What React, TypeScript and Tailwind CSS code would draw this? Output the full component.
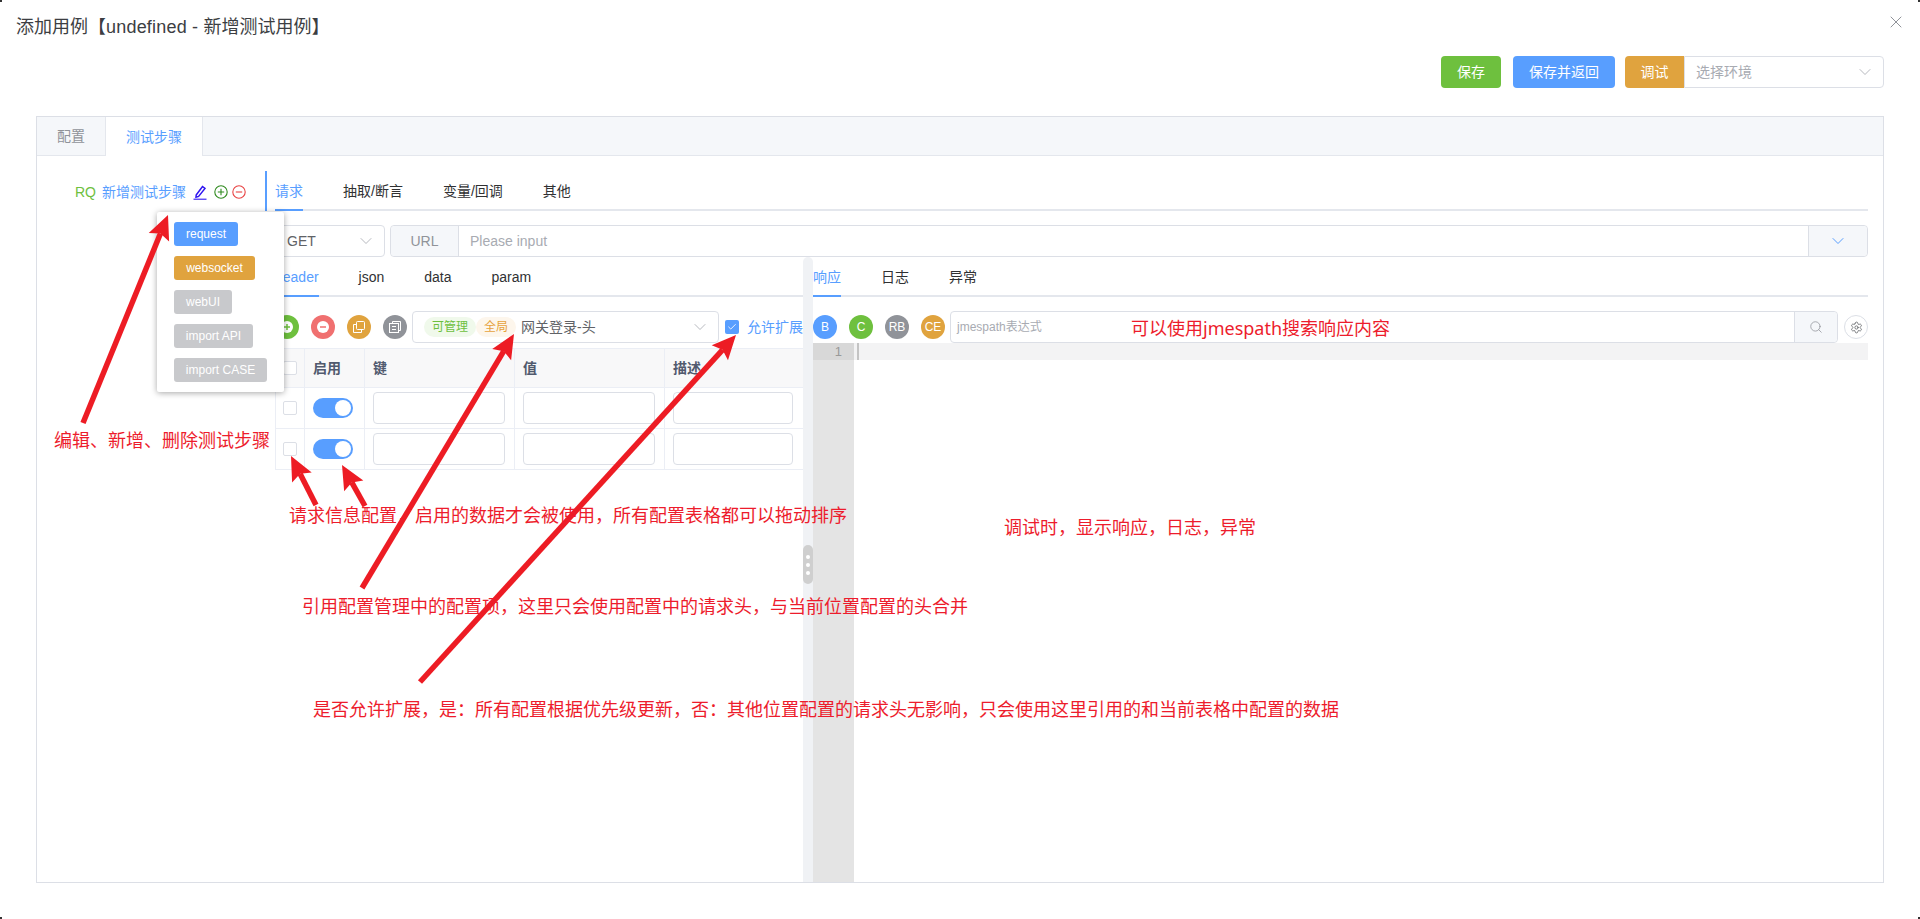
import React from "react";
import { ChevronDown, X, Search, Settings, Check } from "lucide-react";

const FONT = "[font-family:'Liberation_Sans','Noto_Sans_CJK_SC',sans-serif]";

function Arrow({ x1, y1, x2, y2 }: { x1: number; y1: number; x2: number; y2: number }) {
  const dx = x2 - x1, dy = y2 - y1;
  const len = Math.hypot(dx, dy);
  const ux = dx / len, uy = dy / len;
  const bx = x2 - ux * 24, by = y2 - uy * 24;
  const nx = -uy, ny = ux;
  const hw = 11;
  return (
    <g>
      <line x1={x1} y1={y1} x2={bx + ux * 4} y2={by + uy * 4} stroke="#ed1c24" strokeWidth={5.5} />
      <polygon
        points={`${x2},${y2} ${bx + nx * hw},${by + ny * hw} ${bx + ux * 4},${by + uy * 4} ${bx - nx * hw},${by - ny * hw}`}
        fill="#ed1c24"
      />
    </g>
  );
}

function Chevron() {
  return <ChevronDown className="h-[20px] w-[20px] text-[#a8abb2]" strokeWidth={1} />;
}

function TabBar({ items, className }: { items: string[]; className: string }) {
  return (
    <div className={`flex h-[40px] gap-[40px] border-b-2 border-[#e4e7ed] ${className}`}>
      {items.map((t, i) => (
        <div
          key={t}
          className={`-mb-[2px] flex h-[40px] items-center border-b-2 pt-[2px] text-sm ${
            i === 0 ? "border-[#589eff] text-[#589eff]" : "border-transparent text-[#303133]"
          }`}
        >
          {t}
        </div>
      ))}
    </div>
  );
}

function Round({ color, children }: { color: string; children: React.ReactNode }) {
  return (
    <div className={`flex h-[24px] w-[24px] shrink-0 items-center justify-center rounded-full text-xs text-white ${color}`}>
      {children}
    </div>
  );
}

function Box() {
  return <div className="h-[14px] w-[14px] rounded-[2px] border border-[#dcdfe6] bg-white" />;
}

function Row() {
  const cell = "flex items-center border-r border-[#ebeef5]";
  return (
    <div className="flex h-[41px] border-b border-[#ebeef5]">
      <div className={`${cell} w-[29px] justify-center`}>
        <Box />
      </div>
      <div className={`${cell} w-[60px] pl-[8px]`}>
        <div className="flex h-[20px] w-[40px] items-center justify-end rounded-full bg-[#589eff] pr-[2px]">
          <div className="h-[16px] w-[16px] rounded-full bg-white" />
        </div>
      </div>
      <div className={`${cell} w-[150px] pl-[8px]`}>
        <div className="h-[32px] w-[132px] rounded-[4px] border border-[#dcdfe6]" />
      </div>
      <div className={`${cell} w-[150px] pl-[8px]`}>
        <div className="h-[32px] w-[132px] rounded-[4px] border border-[#dcdfe6]" />
      </div>
      <div className="flex flex-1 items-center pl-[8px]">
        <div className="h-[32px] w-[120px] rounded-[4px] border border-[#dcdfe6]" />
      </div>
    </div>
  );
}

const notes = [
  { t: "编辑、新增、删除测试步骤", c: "left-[54px] top-[427px]" },
  { t: "可以使用jmespath搜索响应内容", c: "left-[1131px] top-[315px]" },
  { t: "请求信息配置，启用的数据才会被使用，所有配置表格都可以拖动排序", c: "left-[289px] top-[502px]" },
  { t: "调试时，显示响应，日志，异常", c: "left-[1004px] top-[514px]" },
  { t: "引用配置管理中的配置项，这里只会使用配置中的请求头，与当前位置配置的头合并", c: "left-[302px] top-[593px]" },
  { t: "是否允许扩展，是：所有配置根据优先级更新，否：其他位置配置的请求头无影响，只会使用这里引用的和当前表格中配置的数据", c: "left-[313px] top-[696px]" },
];

export default function App() {
  const th = "flex items-center border-r border-[#ebeef5] text-sm font-bold text-[#515a6e]";
  return (
    <div className={`relative h-[919px] w-full overflow-hidden bg-white ${FONT}`}>
      {/* title */}
      <div className="flex h-[56px] items-start pl-[16px] pt-[16px] text-lg leading-[22px] text-[#3c3e42]">
        <span>
          添加用例【<span className="tracking-[0.2px]">undefined - </span>新增测试用例】
        </span>
      </div>
      <button className="absolute left-[1886px] top-[12px] text-[#909399]">
        <X className="h-[20px] w-[20px]" strokeWidth={1.2} />
      </button>

      {/* actions */}
      <div className="flex h-[32px] justify-end pr-[36px] text-sm text-white">
        <div className="mr-[12px] flex w-[60px] items-center justify-center rounded-[4px] bg-[#6ec03e]">保存</div>
        <div className="mr-[10px] flex w-[102px] items-center justify-center rounded-[4px] bg-[#589eff]">保存并返回</div>
        <div className="flex w-[59px] items-center justify-center rounded-l-[4px] bg-[#e0a33e]">调试</div>
        <div className="flex w-[200px] items-center justify-between rounded-r-[4px] border border-[#dcdfe6] pl-[11px] pr-[8px] text-[#a8abb2]">
          选择环境
          <Chevron />
        </div>
      </div>

      {/* card */}
      <div className="mx-[36px] mt-[28px] flex h-[767px] flex-col border border-[#dcdfe6] text-[#303133]">
        <div className="flex h-[39px] border-b border-[#e4e7ed] bg-[#f5f7fa] text-sm">
          <div className="flex w-[68px] items-center justify-center text-[#909399]">配置</div>
          <div className="-mb-px flex w-[98px] items-center justify-center border-x border-[#e4e7ed] bg-white text-[#589eff]">
            测试步骤
          </div>
        </div>

        <div className="flex min-h-0 flex-1 pt-[15px]">
          {/* step tree */}
          <div className="flex h-[40px] w-[228px] shrink-0 items-start pl-[38px] pt-[11px] text-sm leading-[20px]">
            <span className="text-[#6ec03e]">RQ</span>
            <span className="ml-[6px] text-[#589eff]">新增测试步骤</span>
            <svg className="ml-[7px] mt-[3px]" width="14" height="15" viewBox="0 0 14 15" fill="none" stroke="#2f14f0" strokeWidth="1.5">
              <path d="M3.2 10 L9.5 1.5 L12 3.4 L5.6 11.4 L3 12.2 Z" />
              <path d="M0.5 14.2 H13.5" strokeWidth="1.1" />
            </svg>
            <svg className="ml-[7px] mt-[3px]" width="14" height="14" viewBox="0 0 14 14" fill="none" stroke="#2f8a1e" strokeWidth="1.1">
              <circle cx="7" cy="7" r="6.2" />
              <path d="M7 3.8 V10.2 M3.8 7 H10.2" />
            </svg>
            <svg className="ml-[4px] mt-[3px]" width="14" height="14" viewBox="0 0 14 14" fill="none" stroke="#e84343" strokeWidth="1.1">
              <circle cx="7" cy="7" r="6.2" />
              <path d="M3.8 7 H10.2" />
            </svg>
          </div>

          {/* step editor */}
          <div className="flex min-w-0 flex-1 flex-col pr-[15px]">
            <div className="border-l-2 border-[#589eff] pl-[8px]">
              <TabBar items={["请求", "抽取/断言", "变量/回调", "其他"]} className="" />
            </div>
            <div className="flex min-h-0 flex-1 flex-col pl-[10px]">
              <div className="mt-[14px] flex h-[32px] shrink-0 text-sm">
                <div className="flex w-[110px] items-center justify-between rounded-[4px] border border-[#dcdfe6] pl-[11px] pr-[8px] text-[#606266]">
                  GET
                  <Chevron />
                </div>
                <div className="ml-[5px] flex flex-1 rounded-[4px] border border-[#dcdfe6]">
                  <div className="flex w-[68px] items-center justify-center rounded-l-[4px] border-r border-[#dcdfe6] bg-[#f5f7fa] text-[#909399]">
                    URL
                  </div>
                  <div className="flex flex-1 items-center pl-[11px] text-[#a8abb2]">Please input</div>
                  <div className="flex w-[59px] items-center justify-center rounded-r-[4px] border-l border-[#dcdfe6] bg-[#f5f7fa] text-[#589eff]">
                    <ChevronDown className="h-[20px] w-[20px]" strokeWidth={1.2} />
                  </div>
                </div>
              </div>

              <div className="flex min-h-0 flex-1">
                {/* left pane */}
                <div className="w-[528px] shrink-0">
                  <TabBar items={["header", "json", "data", "param"]} className="" />
                  <div className="mt-[14px] flex h-[32px] items-center gap-[12px]">
                    <Round color="bg-[#6ec03e]">
                      <svg width="14" height="14" viewBox="0 0 14 14">
                        <circle cx="7" cy="7" r="6" fill="#fff" />
                        <path d="M7 4 V10 M4 7 H10" stroke="#6ec03e" strokeWidth="1.5" />
                      </svg>
                    </Round>
                    <Round color="bg-[#f07070]">
                      <svg width="14" height="14" viewBox="0 0 14 14">
                        <circle cx="7" cy="7" r="6" fill="#fff" />
                        <path d="M4 7 H10" stroke="#f07070" strokeWidth="1.5" />
                      </svg>
                    </Round>
                    <Round color="bg-[#e0a33e]">
                      <svg width="14" height="14" viewBox="0 0 14 14" fill="none" stroke="#fff" strokeWidth="1">
                        <rect x="4.5" y="1.5" width="8" height="8" rx="1" />
                        <path d="M4.5 4.5 H1.5 V12.5 H9.5 V9.5" />
                      </svg>
                    </Round>
                    <Round color="bg-[#909399]">
                      <svg width="14" height="14" viewBox="0 0 14 14" fill="none" stroke="#fff" strokeWidth="1">
                        <path d="M4.5 3.5 V1.5 H12.5 V10.5 H10.5" />
                        <rect x="1.5" y="3.5" width="9" height="9" />
                        <path d="M4 6.5 H8 M4 9.5 H8" />
                      </svg>
                    </Round>
                    <div className="-ml-[7px] flex h-[32px] w-[307px] items-center rounded-[4px] border border-[#dcdfe6] pl-[11px] pr-[8px] text-sm text-[#606266]">
                      <span className="flex h-[20px] w-[52px] items-center justify-center rounded-full bg-[#f0f9eb] text-xs text-[#6ec03e]">可管理</span>
                      <span className="flex h-[20px] w-[40px] items-center justify-center rounded-full bg-[#fdf6ec] text-xs text-[#e6a23c]">全局</span>
                      <span className="ml-[5px] flex-1">网关登录-头</span>
                      <Chevron />
                    </div>
                    <div className="-ml-[6px] flex items-center text-sm text-[#589eff]">
                      <div className="flex h-[14px] w-[14px] items-center justify-center rounded-[2px] bg-[#589eff]">
                        <Check className="h-[10px] w-[10px] text-white" strokeWidth={2} />
                      </div>
                      <span className="ml-[8px] whitespace-nowrap">允许扩展</span>
                    </div>
                  </div>
                  <div className="mt-[5px] border-l border-t border-[#ebeef5]">
                    <div className="flex h-[39px] border-b border-[#ebeef5] bg-[#f8f8f9]">
                      <div className={`${th} w-[29px] justify-center`}>
                        <Box />
                      </div>
                      <div className={`${th} w-[60px] pl-[8px]`}>启用</div>
                      <div className={`${th} w-[150px] pl-[8px]`}>键</div>
                      <div className={`${th} w-[150px] pl-[8px]`}>值</div>
                      <div className="flex flex-1 items-center pl-[8px] text-sm font-bold text-[#515a6e]">描述</div>
                    </div>
                    <Row />
                    <Row />
                  </div>
                </div>

                {/* splitter */}
                <div className="relative w-[10px] shrink-0 rounded-t-full bg-[#f0f2f5]">
                  <div className="absolute left-0 top-[288px] flex h-[39px] w-[10px] flex-col items-center justify-center gap-[4px] rounded-full bg-[#cfcfcf]">
                    <div className="h-[4px] w-[4px] rounded-full bg-white" />
                    <div className="h-[4px] w-[4px] rounded-full bg-white" />
                    <div className="h-[4px] w-[4px] rounded-full bg-white" />
                  </div>
                </div>

                {/* right pane */}
                <div className="flex min-w-0 flex-1 flex-col">
                  <TabBar items={["响应", "日志", "异常"]} className="shrink-0" />
                  <div className="mt-[14px] flex h-[32px] shrink-0 items-center">
                    <div className="flex gap-[12px]">
                      <Round color="bg-[#589eff]">B</Round>
                      <Round color="bg-[#6ec03e]">C</Round>
                      <Round color="bg-[#909399]">RB</Round>
                      <Round color="bg-[#e0a33e]">CE</Round>
                    </div>
                    <div className="ml-[5px] flex h-[32px] flex-1 rounded-[4px] border border-[#dcdfe6]">
                      <div className="flex flex-1 items-center pl-[6px] text-xs text-[#a8abb2]">jmespath表达式</div>
                      <div className="flex w-[43px] items-center justify-center rounded-r-[4px] border-l border-[#dcdfe6] bg-[#f5f7fa] text-[#909399]">
                        <Search className="h-[14px] w-[14px]" strokeWidth={1.3} />
                      </div>
                    </div>
                    <div className="ml-[6px] flex h-[24px] w-[24px] items-center justify-center rounded-full border border-[#dcdfe6] text-[#606266]">
                      <Settings className="h-[13px] w-[13px]" strokeWidth={1.5} />
                    </div>
                  </div>
                  <div className="flex min-h-0 flex-1 text-[13px]">
                    <div className="w-[41px] shrink-0 bg-[#e4e4e4]">
                      <div className="h-[17px] bg-[#d8d8d8] pr-[12px] text-right leading-[17px] text-[#999]">1</div>
                    </div>
                    <div className="h-[17px] flex-1 bg-[#f3f3f4] pl-[3px]">
                      <div className="h-[17px] w-[2px] bg-[#c4c4c4]" />
                    </div>
                  </div>
                </div>
              </div>
            </div>
          </div>
        </div>
      </div>

      {/* popover */}
      <div className="absolute left-[157px] top-[212px] flex h-[180px] w-[127px] flex-col items-start gap-[10px] rounded-[2px] bg-white pl-[17px] pt-[10px] text-xs text-white shadow-[0_1px_6px_rgba(0,0,0,0.35)]">
        <div className="flex h-[24px] w-[64px] items-center justify-center rounded-[3px] bg-[#589eff]">request</div>
        <div className="flex h-[24px] w-[81px] items-center justify-center rounded-[3px] bg-[#e0a33e]">websocket</div>
        <div className="flex h-[24px] w-[58px] items-center justify-center rounded-[3px] bg-[#c8c9cc]">webUI</div>
        <div className="flex h-[24px] w-[79px] items-center justify-center rounded-[3px] bg-[#c8c9cc]">import API</div>
        <div className="flex h-[24px] w-[93px] items-center justify-center rounded-[3px] bg-[#c8c9cc]">import CASE</div>
      </div>

      {/* annotation arrows */}
      <svg className="pointer-events-none absolute left-0 top-0" width="1920" height="919">
        <Arrow x1={83} y1={423} x2={168} y2={215} />
        <Arrow x1={316} y1={505} x2={291} y2={456} />
        <Arrow x1={365} y1={506} x2={342} y2={465} />
        <Arrow x1={362} y1={588} x2={514} y2={334} />
        <Arrow x1={420} y1={682} x2={736} y2={335} />
      </svg>

      {/* annotation notes */}
      {notes.map((n) => (
        <div
          key={n.t}
          className={`absolute whitespace-nowrap text-[18px] leading-[26px] text-[#ed1c2c] [font-family:'Noto_Sans','Noto_Sans_CJK_SC',sans-serif] ${n.c}`}
        >
          {n.t}
        </div>
      ))}

      {/* window corner specks */}
      <div className="absolute left-0 top-0 h-[2px] w-[2px] bg-[#333]" />
      <div className="absolute right-0 top-0 h-[2px] w-[2px] bg-[#333]" />
      <div className="absolute bottom-0 left-0 h-[2px] w-[2px] bg-[#333]" />
      <div className="absolute bottom-0 right-0 h-[2px] w-[2px] bg-[#333]" />
    </div>
  );
}
